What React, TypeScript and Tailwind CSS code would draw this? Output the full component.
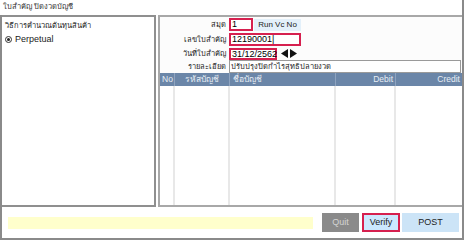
const font = { fontFamily: '"Liberation Sans", "Noto Sans", Tahoma, sans-serif' };

const columns = [
  { key: "no", label: "No", width: "w-[15px]", align: "text-left pl-[2px]" },
  { key: "code", label: "รหัสบัญชี", width: "w-[55px]", align: "text-center" },
  { key: "name", label: "ชื่อบัญชี", width: "w-[106px]", align: "text-left pl-[3px]" },
  { key: "debit", label: "Debit", width: "w-[60px]", align: "text-right pr-[2px]" },
  { key: "credit", label: "Credit", width: "flex-1", align: "text-right pr-[2px]" },
];

function Field({ label, className = "", children }: { label: string; className?: string; children: React.ReactNode }) {
  return (
    <div className={`flex items-center h-[13px] ${className}`}>
      <div className="w-[69px] text-right pr-[3px] text-[7.5px] text-[#222]">{label}</div>
      {children}
    </div>
  );
}

export default function App() {
  return (
    <div style={font} className="w-[464px] h-[240px] bg-white flex flex-col overflow-hidden">
      <div className="h-[15px] pl-[3px] text-[7.5px] leading-[14px] text-[#333] border-r-2 border-[#8a8a8a]">
        ใบสำคัญ ปิดงวดบัญชี
      </div>
      <div className="flex-1 flex flex-col border-l-2 border-r-2 border-b-2 border-[#8a8a8a]">
        <div className="h-[192px] flex gap-[2px]">
          <div className="w-[154px] border-2 border-l-0 border-[#8f8f8f] bg-white pl-[3px] pt-[3px]">
            <div className="text-[7.5px] text-[#222] leading-[12px]">วิธีการคำนวณต้นทุนสินค้า</div>
            <div className="flex items-center gap-[3px] mt-[1px]">
              <span className="w-[7px] h-[7px] rounded-full border border-[#333] flex items-center justify-center">
                <span className="w-[3px] h-[3px] rounded-full bg-[#222]" />
              </span>
              <span className="text-[9px] text-[#222]">Perpetual</span>
            </div>
          </div>
          <div className="flex-1 flex flex-col border-t-2 border-l-2 border-b-2 border-[#a8a8a8] bg-[#fcfcfc]">
            <div className="flex flex-col pt-[1px]">
              <Field label="สมุด">
                <div className="w-[24px] h-[13px] border-2 border-[#d6204f] bg-white text-[9px] leading-[9px] pl-[1px]">1</div>
                <div className="ml-[1px] w-[47px] h-[12px] bg-[#e3f0fa] text-[8px] leading-[12px] text-center text-[#222]">Run Vc No</div>
              </Field>
              <Field label="เลขใบสำคัญ" className="mt-[2px]">
                <div className="w-[72px] h-[13px] border-2 border-[#d6204f] bg-white text-[9px] leading-[9px] pl-[1px]">12190001|</div>
              </Field>
              <Field label="วันที่ใบสำคัญ" className="mt-[1px]">
                <div className="w-[48px] h-[12px] border-2 border-[#d6204f] bg-white text-[9px] leading-[8px] pl-[1px]">31/12/2562</div>
                <div className="ml-[4px] flex items-center gap-[2px]">
                  <svg width="7" height="9" viewBox="0 0 7 9"><path d="M7 0 L0 4.5 L7 9 Z" fill="#111" /></svg>
                  <svg width="7" height="9" viewBox="0 0 7 9"><path d="M0 0 L7 4.5 L0 9 Z" fill="#111" /></svg>
                </div>
              </Field>
              <Field label="รายละเอียด">
                <div className="w-[232px] h-[13px] border border-[#9a9a9a] bg-white text-[7.5px] leading-[11px] pl-[1px] text-[#222]">
                  ปรับปรุงปิดกำไรสุทธิปลายงวด
                </div>
              </Field>
            </div>
            <div className="flex h-[13px] bg-[#6b86a8] text-[8.5px] leading-[13px] text-[#e8eef5]">
              {columns.map((c) => (
                <div key={c.key} className={`${c.width} ${c.align} border-r border-[#8ea3bf] last:border-r-0`}>
                  {c.label}
                </div>
              ))}
            </div>
            <div className="flex-1 flex bg-white">
              {columns.map((c) => (
                <div key={c.key} className={`${c.width} border-r-2 border-[#e8e8e8] last:border-r-0`} />
              ))}
            </div>
          </div>
        </div>
        <div className="flex-1 flex items-center pl-[6px] pr-[2px]">
          <div className="w-[305px] h-[12px] bg-[#ffffcc]" />
          <div className="ml-[9px] w-[37px] h-[19px] bg-[#8a8a8a] text-[9px] leading-[19px] text-center text-[#d4d4d4]">Quit</div>
          <div className="ml-[3px] w-[38px] h-[19px] border-2 border-[#d6204f] bg-[#cce8ff] text-[9px] leading-[15px] text-center text-[#222]">Verify</div>
          <div className="ml-[2px] w-[57px] h-[19px] bg-[#cce4f7] text-[9px] leading-[19px] text-center text-[#222]">POST</div>
        </div>
      </div>
    </div>
  );
}
